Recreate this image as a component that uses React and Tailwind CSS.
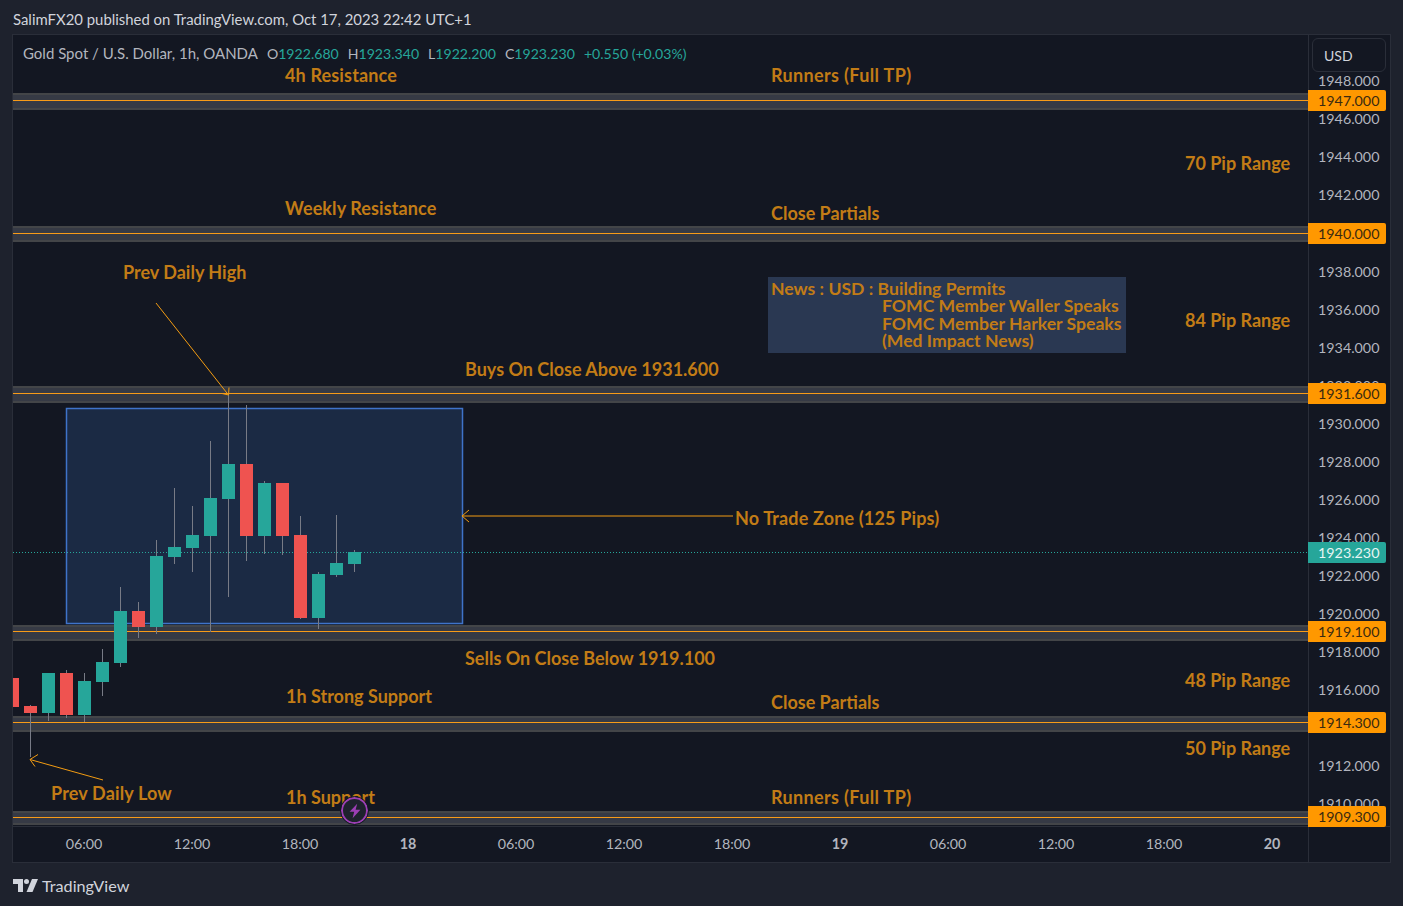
const candles = [
  [12.5, 678, 707, 678, 707, 'r'],
  [30.5, 706, 713, 705, 757, 'r'],
  [48.5, 673, 713, 673, 721, 'g'],
  [66.5, 673, 715, 670, 718, 'r'],
  [84.5, 681, 715, 673, 722, 'g'],
  [102.5, 662, 682, 649, 696, 'g'],
  [120.5, 611, 663, 587, 667, 'g'],
  [138.5, 611, 627, 602, 638, 'r'],
  [156.5, 556, 627, 540, 634, 'g'],
  [174.5, 547, 557, 488, 564, 'g'],
  [192.5, 535, 548, 506, 572, 'g'],
  [210.5, 498, 536, 441, 632, 'g'],
  [228.5, 464, 499, 393, 597, 'g'],
  [246.5, 464, 536, 405, 561, 'r'],
  [264.5, 483, 536, 481, 554, 'g'],
  [282.5, 483, 536, 483, 555, 'r'],
  [300.5, 535, 618, 516, 619, 'r'],
  [318.5, 574, 618, 572, 629, 'g'],
  [336.5, 563, 575, 515, 577, 'g'],
  [354.5, 552, 564, 550, 572, 'g'],
];

// [line, top, bottom]
const bands = [
  [100, 93, 110],
  [233, 226, 242],
  [393, 386, 403],
  [631, 625, 641],
  [722, 716, 732],
  [817, 811, 825],
];

const ticks = ['1948.000', '1946.000', '1944.000', '1942.000', '1940.000', '1938.000', '1936.000', '1934.000', '1932.000', '1930.000', '1928.000', '1926.000', '1924.000', '1922.000', '1920.000', '1918.000', '1916.000', '1914.000', '1912.000', '1910.000'];

const times = [['06:00'], ['12:00'], ['18:00'], ['18', true], ['06:00'], ['12:00'], ['18:00'], ['19', true], ['06:00'], ['12:00'], ['18:00'], ['20', true]];

const labels = [
  ['4h Resistance', 'left-[272px] top-[29px] tracking-[0.15px]'],
  ['Runners (Full TP)', 'left-[758px] top-[29px] tracking-[0.35px]'],
  ['70 Pip Range', 'left-[1172px] top-[117px]'],
  ['Weekly Resistance', 'left-[272px] top-[162px] tracking-[0.1px]'],
  ['Close Partials', 'left-[758px] top-[167px]'],
  ['Prev Daily High', 'left-[110px] top-[226px]'],
  ['84 Pip Range', 'left-[1172px] top-[274px]'],
  ['Buys On Close Above 1931.600', 'left-[452px] top-[323px]'],
  ['No Trade Zone (125 Pips)', 'left-[722px] top-[472px] tracking-[0.15px]'],
  ['Sells On Close Below 1919.100', 'left-[452px] top-[612px]'],
  ['48 Pip Range', 'left-[1172px] top-[634px]'],
  ['1h Strong Support', 'left-[273px] top-[650px]'],
  ['Close Partials', 'left-[758px] top-[656px]'],
  ['50 Pip Range', 'left-[1172px] top-[702px]'],
  ['Prev Daily Low', 'left-[38px] top-[747px] tracking-[0.15px]'],
  ['1h Support', 'left-[273px] top-[751px]'],
  ['Runners (Full TP)', 'left-[758px] top-[751px] tracking-[0.35px]'],
];

const badges = [
  ['1947.000', 'top-[55px]', 'bg-[#ff9800] text-[#3a2a10]'],
  ['1940.000', 'top-[188px]', 'bg-[#ff9800] text-[#3a2a10]'],
  ['1931.600', 'top-[348px]', 'bg-[#ff9800] text-[#3a2a10]'],
  ['1923.230', 'top-[507px]', 'bg-[#26a69a] text-[#e6f5f3]'],
  ['1919.100', 'top-[586px]', 'bg-[#ff9800] text-[#3a2a10]'],
  ['1914.300', 'top-[677px]', 'bg-[#ff9800] text-[#3a2a10]'],
  ['1909.300', 'top-[771px]', 'bg-[#ff9800] text-[#3a2a10]'],
];

// page coords -> pane coords, pane starts at 13,35
const ChartDrawing = () => (
  <svg className="absolute left-0 top-0" width="1295" height="792" viewBox="13 35 1295 792" fill="none">
    {bands.map(([line, top, bottom]) => (
      <g key={line}>
        <rect x="13" y={top} width="1295" height={bottom - top} fill="#363a45" />
        <rect x="13" y={top} width="1295" height="2" fill="#434548" />
        <rect x="13" y={bottom - 2} width="1295" height="2" fill="#434548" />
        <rect x="13" y={line} width="1295" height="1" fill="#f89b18" />
      </g>
    ))}
    <rect x="66.5" y="408.5" width="396" height="215" fill="#1b2a44" stroke="#3f73c9" strokeWidth="1.5" />
    <line x1="13" y1="552.5" x2="1308" y2="552.5" stroke="#26a69a" strokeDasharray="1 2" />
    {candles.map(([x, top, bottom, hi, lo, c]) => (
      <g key={x}>
        <rect x={x - 0.5} y={hi} width="1" height={lo - hi} fill="#787b86" />
        <rect x={x - 6.5} y={top} width="13" height={bottom - top} fill={c === 'g' ? '#26a69a' : '#ef5350'} />
      </g>
    ))}
    <g stroke="#f39c12" strokeWidth="1">
      <path d="M156 303 L228.5 395" />
      <path d="M222 393.5 L228.5 395 L229 387.5" />
      <path d="M733 516 H462" />
      <path d="M469 510 L462 516 L469 522" />
      <path d="M103 780 L30 759.5" />
      <path d="M38 754.5 L30 759.5 L35 766.5" />
    </g>
  </svg>
);

const NewsBox = () => (
  <div className="absolute left-[755px] top-[242px] flex h-[76px] w-[358px] flex-col whitespace-nowrap bg-[#2a3852] px-[3px] pt-[3px] text-[17.6px] font-bold leading-[17.3px] text-[#c27c16]">
    <span>News : USD : Building Permits</span>
    <span className="pl-[111px]">FOMC Member Waller Speaks</span>
    <span className="pl-[111px]">FOMC Member Harker Speaks</span>
    <span className="pl-[111px]">(Med Impact News)</span>
  </div>
);

const EventBadge = () => (
  <div className="absolute left-[328px] top-[762px] flex h-[27px] w-[27px] items-center justify-center rounded-full border-2 border-[#9c3fb5] bg-[#1e222d] outline-1 outline-[#131722]">
    <svg width="14" height="16" viewBox="0 0 14 16" fill="#9c3fb5">
      <path d="M9.2 0.8 L1.6 8.8 H6.2 L4.6 15.2 L12.4 6.8 H7.6 Z" />
    </svg>
  </div>
);

const TvLogo = () => (
  <svg width="25" height="13" viewBox="0 0 25 13" fill="#d1d4dc">
    <path d="M0 0 H10 V13 H5 V5 H0 Z" />
    <circle cx="13.5" cy="2.5" r="2.5" />
    <path d="M19 0 H25 L19.5 13 H13.5 Z" />
  </svg>
);

export default function App() {
  return (
    <div className="flex h-[906px] w-[1403px] flex-col overflow-hidden bg-[#1e222d] font-['Lato','Liberation_Sans',sans-serif]">
      <div className="flex h-[34px] items-start pl-[13px] pt-[11px] text-[14.9px] leading-[17px] text-[#d1d4dc]">
        SalimFX20 published on TradingView.com, Oct 17, 2023 22:42 UTC+1
      </div>

      <div className="ml-[12px] flex h-[829px] w-[1379px] flex-col border border-[#2a2e39] bg-[#131722]">
        <div className="flex h-[792px] border-b border-[#2a2e39]">
          <div className="relative w-[1295px] shrink-0 overflow-hidden">
            <ChartDrawing />
            <div className="absolute left-[10px] top-[9px] flex items-baseline gap-[9px] text-[14.1px] leading-[18px] text-[#b2b5be]">
              <span className="text-[15px]">Gold Spot / U.S. Dollar, 1h, OANDA</span>
              <span>O<span className="text-[#26a69a]">1922.680</span></span>
              <span>H<span className="text-[#26a69a]">1923.340</span></span>
              <span>L<span className="text-[#26a69a]">1922.200</span></span>
              <span>C<span className="text-[#26a69a]">1923.230</span></span>
              <span className="text-[#26a69a]">+0.550 (+0.03%)</span>
            </div>
            {labels.map(([text, pos]) => (
              <span key={text + pos} className={`absolute whitespace-nowrap text-[18px] font-bold leading-[22px] text-[#c27c16] ${pos}`}>
                {text}
              </span>
            ))}
            <NewsBox />
            <EventBadge />
          </div>

          <div className="relative flex-1 border-l border-[#2a2e39]">
            <div className="mx-[3px] mt-[3px] flex h-[34px] w-[74px] items-center rounded-[6px] border border-[#2a2e39] pl-[11px] text-[14px] text-[#d1d4dc]">
              USD
            </div>
            <div className="absolute left-0 top-[27px] flex w-full flex-col">
              {ticks.map(tick => (
                <span key={tick} className="flex h-[38.05px] items-center pl-[9px] text-[14.3px] text-[#b2b5be]">
                  {tick}
                </span>
              ))}
            </div>
            {badges.map(([value, top, color]) => (
              <span key={value} className={`absolute left-[-1px] flex h-[21px] w-[78px] items-center rounded-r-[2px] pl-[10px] text-[14.3px] ${top} ${color}`}>
                {value}
              </span>
            ))}
          </div>
        </div>

        <div className="flex flex-1">
          <div className="grid w-[1295px] shrink-0 grid-cols-[repeat(12,108px)] pb-[2px] pl-[17px]">
            {times.map(([time, bold], i) => (
              <span key={i} className={`flex items-center justify-center text-[14.3px] text-[#b2b5be] ${bold ? 'font-bold' : ''}`}>
                {time}
              </span>
            ))}
          </div>
          <div className="flex-1 border-l border-[#2a2e39]" />
        </div>
      </div>

      <div className="flex items-center gap-[4px] pl-[13px] pt-[14px] text-[16.2px] leading-[17px] text-[#d1d4dc]">
        <TvLogo />
        <span>TradingView</span>
      </div>
    </div>
  );
}
